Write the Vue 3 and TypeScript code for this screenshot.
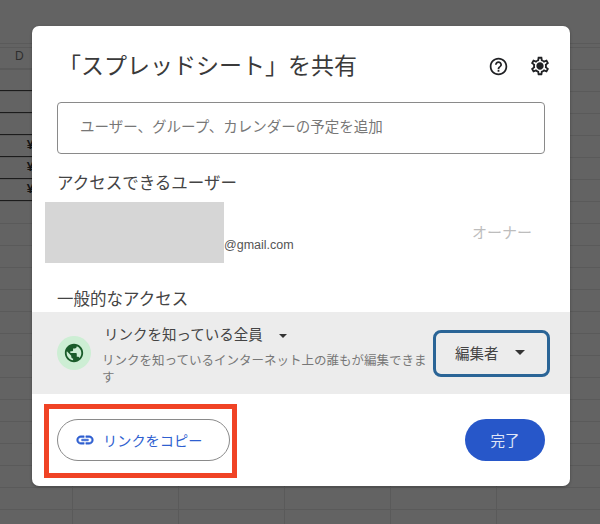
<script setup lang="ts">
// 背景シートの行（D列のみ見えている）
const sheetRows = ['', '', '', '¥', '¥', '¥'];
</script>

<template>
  <div class="page">
    <div class="sheet-left">
      <div class="col-head">D</div>
      <div v-for="(row, i) in sheetRows" :key="i" class="sheet-row">{{ row }}</div>
    </div>

    <div class="dialog">
      <header class="dialog-head">
        <h1 class="title">「スプレッドシート」を共有</h1>
        <div class="head-icons">
          <svg width="21" height="21" viewBox="0 0 24 24" fill="#202124">
            <path d="M11 18h2v-2h-2v2zm1-16C6.48 2 2 6.48 2 12s4.48 10 10 10 10-4.48 10-10S17.52 2 12 2zm0 18c-4.41 0-8-3.59-8-8s3.59-8 8-8 8 3.59 8 8-3.59 8-8 8zm0-14c-2.21 0-4 1.79-4 4h2c0-1.1.9-2 2-2s2 .9 2 2c0 2-3 1.75-3 5h2c0-2.25 3-2.5 3-5 0-2.21-1.79-4-4-4z" />
          </svg>
          <svg width="22" height="22" viewBox="0 0 24 24" fill="#202124">
            <path d="M19.43 12.98c.04-.32.07-.64.07-.98s-.03-.66-.07-.98l2.11-1.65c.19-.15.24-.42.12-.64l-2-3.46c-.12-.22-.39-.3-.61-.22l-2.49 1c-.52-.4-1.08-.73-1.69-.98l-.38-2.65C14.46 2.18 14.25 2 14 2h-4c-.25 0-.46.18-.49.42l-.38 2.65c-.61.25-1.17.59-1.69.98l-2.49-1c-.23-.09-.49 0-.61.22l-2 3.46c-.13.22-.07.49.12.64l2.11 1.65c-.04.32-.07.65-.07.98s.03.66.07.98l-2.11 1.65c-.19.15-.24.42-.12.64l2 3.46c.12.22.39.3.61.22l2.49-1c.52.4 1.08.73 1.69.98l.38 2.65c.03.24.24.42.49.42h4c.25 0 .46-.18.49-.42l.38-2.65c.61-.25 1.17-.59 1.69-.98l2.49 1c.23.09.49 0 .61-.22l2-3.46c.12-.22.07-.49-.12-.64l-2.11-1.65zM17.45 11.27c.04.31.05.52.05.73 0 .21-.02.43-.05.73l-.14 1.13.89.7 1.08.84-.7 1.21-1.27-.51-1.04-.42-.9.68c-.43.32-.84.56-1.25.73l-1.06.43-.16 1.13-.2 1.35h-1.4l-.19-1.35-.16-1.13-1.06-.43c-.43-.18-.83-.41-1.23-.71l-.91-.7-1.06.43-1.27.51-.7-1.21 1.08-.84.89-.7-.14-1.13c-.03-.31-.05-.54-.05-.74s.02-.43.05-.73l.14-1.13-.89-.7-1.08-.84.7-1.21 1.27.51 1.04.42.9-.68c.43-.32.84-.56 1.25-.73l1.06-.43.16-1.13.2-1.35h1.39l.19 1.35.16 1.13 1.06.43c.43.18.83.41 1.23.71l.91.7 1.06-.43 1.27-.51.7 1.21-1.07.85-.89.7.14 1.13zM12 8c-2.21 0-4 1.79-4 4s1.79 4 4 4 4-1.79 4-4-1.79-4-4-4z" />
          </svg>
        </div>
      </header>

      <div class="add-input">ユーザー、グループ、カレンダーの予定を追加</div>

      <h2 class="section-title users-title">アクセスできるユーザー</h2>
      <div class="owner-row">
        <div class="masked"></div>
        <span class="mail">@gmail.com</span>
        <span class="owner">オーナー</span>
      </div>

      <h2 class="section-title general-title">一般的なアクセス</h2>
      <div class="access-row">
        <div class="globe">
          <svg width="22" height="22" viewBox="0 0 24 24" fill="#1a5c2a">
            <path d="M12 2C6.48 2 2 6.48 2 12s4.48 10 10 10 10-4.48 10-10S17.52 2 12 2zm-1 17.93c-3.95-.49-7-3.85-7-7.93 0-.62.08-1.21.21-1.79L9 15v1c0 1.1.9 2 2 2v1.93zm6.9-2.54c-.26-.81-1-1.39-1.9-1.39h-1v-3c0-.55-.45-1-1-1H8v-2h2c.55 0 1-.45 1-1V7h2c1.1 0 2-.9 2-2v-.41c2.93 1.19 5 4.06 5 7.41 0 2.08-.8 3.97-2.1 5.39z" />
          </svg>
        </div>
        <div class="access-text">
          <div class="access-name">リンクを知っている全員<span class="caret small"></span></div>
          <div class="access-desc">リンクを知っているインターネット上の誰もが編集できます</div>
        </div>
        <div class="role-select">編集者<span class="caret"></span></div>
      </div>

      <footer class="dialog-foot">
        <div class="copy-mark">
          <button class="copy-btn">
            <svg width="20" height="20" viewBox="0 0 24 24" fill="#2f5fd0" stroke="#2f5fd0" stroke-width="0.6">
              <path d="M3.9 12c0-1.71 1.39-3.1 3.1-3.1h4V7H7c-2.76 0-5 2.24-5 5s2.24 5 5 5h4v-1.9H7c-1.71 0-3.1-1.39-3.1-3.1zM8 13h8v-2H8v2zm9-6h-4v1.9h4c1.71 0 3.1 1.39 3.1 3.1s-1.39 3.1-3.1 3.1h-4V17h4c2.76 0 5-2.24 5-5s-2.24-5-5-5z" />
            </svg>
            リンクをコピー
          </button>
        </div>
        <button class="done-btn">完了</button>
      </footer>
    </div>
  </div>
</template>

<style>
html,
body {
  margin: 0;
  background: #636363;
}
</style>

<style scoped>
.page {
  width: 600px;
  height: 524px;
  box-sizing: border-box;
  padding: 26px 30px 38px 0;
  display: flex;
  overflow: hidden;
  font-family: "Liberation Sans", "Noto Sans CJK JP", sans-serif;
  background-color: #636363;
  /* 上のバンドはツールバー部分、その下にシートの罫線 */
  background-image:
    linear-gradient(#636363 43px, #5a5a5a 43px, #5a5a5a 44px, transparent 44px),
    linear-gradient(#5a5a5a 1px, transparent 1px),
    linear-gradient(90deg, #5a5a5a 1px, transparent 1px);
  background-size: 100% 100%, 106px 22px, 106px 22px;
  background-position: 0 0, 0 3px, 72px 0;
}

.sheet-left {
  width: 32px;
  flex: none;
  margin-top: 17px;
}

.col-head {
  height: 26px;
  line-height: 25px;
  padding-left: 15px;
  font-size: 12px;
  color: #2e2e2e;
  border-top: 1px solid #5a5a5a;
  border-bottom: 1px solid #5a5a5a;
  box-sizing: border-box;
}

.sheet-row {
  width: 34px;
  height: 22px;
  box-sizing: border-box;
  border-bottom: 1px solid #1c1c1c;
  text-align: right;
  font-size: 13px;
  line-height: 20px;
  font-weight: 700;
  color: #151515;
}

.dialog {
  width: 538px;
  height: 460px;
  flex: none;
  background: #fff;
  border-radius: 7px;
  display: flex;
  flex-direction: column;
  box-shadow: 0 1px 3px rgba(0, 0, 0, 0.3);
  position: relative;
}

.dialog-head {
  display: flex;
  align-items: center;
  justify-content: space-between;
  height: 76px;
  padding: 0 19px 0 26px;
  box-sizing: border-box;
}

.title {
  margin: 0;
  font-size: 23px;
  font-weight: 400;
  color: #3a3a3a;
}

.head-icons {
  display: flex;
  align-items: center;
  gap: 20px;
  margin-top: 4px;
}

.add-input {
  margin: 0 25px;
  height: 52px;
  border: 1px solid #8a8a8a;
  border-radius: 4px;
  box-sizing: border-box;
  padding: 0 22px;
  line-height: 49px;
  font-size: 14.5px;
  color: #777;
}

.section-title {
  margin: 0 0 0 25px;
  font-size: 16.5px;
  line-height: 24px;
  font-weight: 400;
  color: #444;
}

.users-title {
  margin-top: 17px;
}

.owner-row {
  display: flex;
  align-items: flex-end;
  margin: 7px 38px 0 13px;
  height: 61px;
}

.masked {
  width: 179px;
  height: 61px;
  background: #d6d6d6;
}

.mail {
  font-size: 12.5px;
  color: #555;
  line-height: 14px;
  margin-bottom: 11px;
}

.owner {
  margin-left: auto;
  font-size: 15px;
  line-height: 20px;
  color: #bdbdbd;
  align-self: center;
}

.general-title {
  margin-top: 24px;
  margin-bottom: 1px;
}

.access-row {
  display: flex;
  align-items: center;
  height: 82px;
  padding: 0 20px 0 25px;
  background: #ececec;
  box-sizing: border-box;
}

.globe {
  width: 34px;
  height: 34px;
  border-radius: 50%;
  background: #cdeed4;
  display: flex;
  align-items: center;
  justify-content: center;
  flex: none;
}

.access-text {
  width: 330px;
  margin-left: 11px;
  padding-top: 5px;
  flex: none;
}

.access-name {
  font-size: 14.5px;
  line-height: 20px;
  color: #444;
  margin-left: 2px;
}

.access-desc {
  font-size: 12.5px;
  line-height: 17px;
  color: #777;
  margin-top: 8px;
}

.caret {
  display: inline-block;
  margin-left: 16px;
  vertical-align: middle;
  border-left: 5px solid transparent;
  border-right: 5px solid transparent;
  border-top: 5px solid #333;
}

.caret.small {
  border-left-width: 4px;
  border-right-width: 4px;
  border-top-width: 4px;
}

.role-select {
  margin-left: auto;
  width: 117px;
  height: 47px;
  border: 3px solid #2a6496;
  border-radius: 8px;
  box-sizing: border-box;
  display: flex;
  align-items: center;
  padding: 0 0 2px 19px;
  font-size: 14.5px;
  color: #444;
}

.dialog-foot {
  flex: 1;
  display: flex;
  align-items: flex-start;
  justify-content: space-between;
  padding: 10px 25px 0 12px;
}

.copy-mark {
  border: 5px solid #f04325;
  padding: 10px 2px 12px 8px;
}

.copy-btn {
  width: 173px;
  height: 42px;
  border: 1px solid #8a8a8a;
  border-radius: 21px;
  background: #fff;
  display: flex;
  align-items: center;
  gap: 8px;
  padding: 0 0 0 17px;
  font: inherit;
  font-size: 14.2px;
  color: #2f5fd0;
  box-sizing: border-box;
}

.done-btn {
  width: 80px;
  height: 42px;
  margin-top: 15px;
  border: none;
  border-radius: 21px;
  background: #2757c9;
  padding: 0 0 2px;
  font: inherit;
  font-size: 14.5px;
  color: #dfe6f7;
}
</style>
